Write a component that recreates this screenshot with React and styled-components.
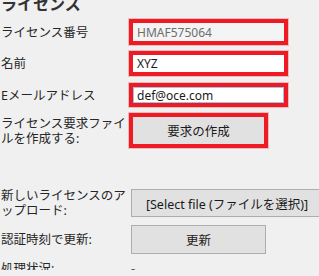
import React from "react";
import styled, { createGlobalStyle } from "styled-components";

const Global = createGlobalStyle`
  html, body {
    margin: 0;
    padding: 0;
    background: #f0f0f0;
    overflow: hidden;
  }
  body {
    font-family: "Noto Sans", "Noto Sans CJK JP", sans-serif;
    color: #262626;
  }
`;

const Page = styled.div`
  width: 319px;
  height: 276px;
  padding-left: 1px;
  box-sizing: border-box;
`;

const Title = styled.h2`
  margin: -6px 0 0;
  height: 20px;
  font-size: 16px;
  line-height: 20px;
  font-weight: bold;
  color: #333;
`;

const Row = styled.div`
  display: flex;
  align-items: center;
  height: ${(p) => p.$h}px;
  margin-top: ${(p) => p.$top}px;
`;

const Label = styled.div`
  width: 128px;
  flex: none;
  font-size: 12.5px;
  line-height: 15px;
  line-break: loose;
`;

const Mark = styled.div`
  border: 4px solid #ed1c24;
  box-shadow: 0 0 0 1px rgba(237, 28, 36, 0.25);
  width: ${(p) => p.$w}px;
  height: 100%;
  box-sizing: border-box;
  display: flex;
  flex: none;
`;

const Field = styled.div`
  flex: 1;
  display: flex;
  align-items: center;
  padding: 0 4px;
  font-size: 12px;
  background: ${(p) => (p.$readonly ? "#f4f4f4" : "#fff")};
  color: ${(p) => (p.$readonly ? "#6d6d6d" : "#1a1a1a")};
  box-shadow: ${(p) => (p.$focus ? "inset 0 0 0 1px #9bc4e8" : "none")};
`;

const Squiggle = styled.span`
  text-decoration: underline wavy #e02020;
  text-decoration-thickness: 1px;
  text-underline-offset: 2px;
`;

const Button = styled.button`
  width: ${(p) => p.$w}px;
  height: 100%;
  box-sizing: border-box;
  margin: 0 0 0 ${(p) => p.$ml || 0}px;
  padding: 0;
  font-family: "Noto Sans", "Noto Sans CJK JP", sans-serif;
  font-size: 12.5px;
  color: #1a1a1a;
  background: #e1e1e1;
  border: ${(p) => (p.$plain ? "1px solid #adadad" : "none")};
  white-space: nowrap;
  flex: none;
`;

const Status = styled.div`
  font-size: 12.5px;
  padding-left: 2px;
  color: #555;
`;

export default function App() {
  return (
    <Page>
      <Global />
      <Title>ライセンス</Title>

      <Row $h={26} $top={5}>
        <Label>ライセンス番号</Label>
        <Mark $w={159}>
          <Field $readonly>HMAF575064</Field>
        </Mark>
      </Row>

      <Row $h={25} $top={6}>
        <Label>名前</Label>
        <Mark $w={159}>
          <Field>XYZ</Field>
        </Mark>
      </Row>

      <Row $h={24} $top={7}>
        <Label>Eメールアドレス</Label>
        <Mark $w={159}>
          <Field $focus>
            def@<Squiggle>oce.com</Squiggle>
          </Field>
        </Mark>
      </Row>

      <Row $h={35} $top={6}>
        <Label>ライセンス要求ファイルを作成する:</Label>
        <Mark $w={139}>
          <Button $w={131}>要求の作成</Button>
        </Mark>
      </Row>

      <Row $h={28} $top={41}>
        <Label>新しいライセンスのアップロード:</Label>
        <Button $plain $w={192} $ml={2}>
          [Select file (ファイルを選択)]
        </Button>
      </Row>

      <Row $h={29} $top={8}>
        <Label>認証時刻で更新:</Label>
        <Button $plain $w={135} $ml={2}>
          更新
        </Button>
      </Row>

      <Row $h={20} $top={4}>
        <Label>処理状況:</Label>
        <Status>-</Status>
      </Row>
    </Page>
  );
}
